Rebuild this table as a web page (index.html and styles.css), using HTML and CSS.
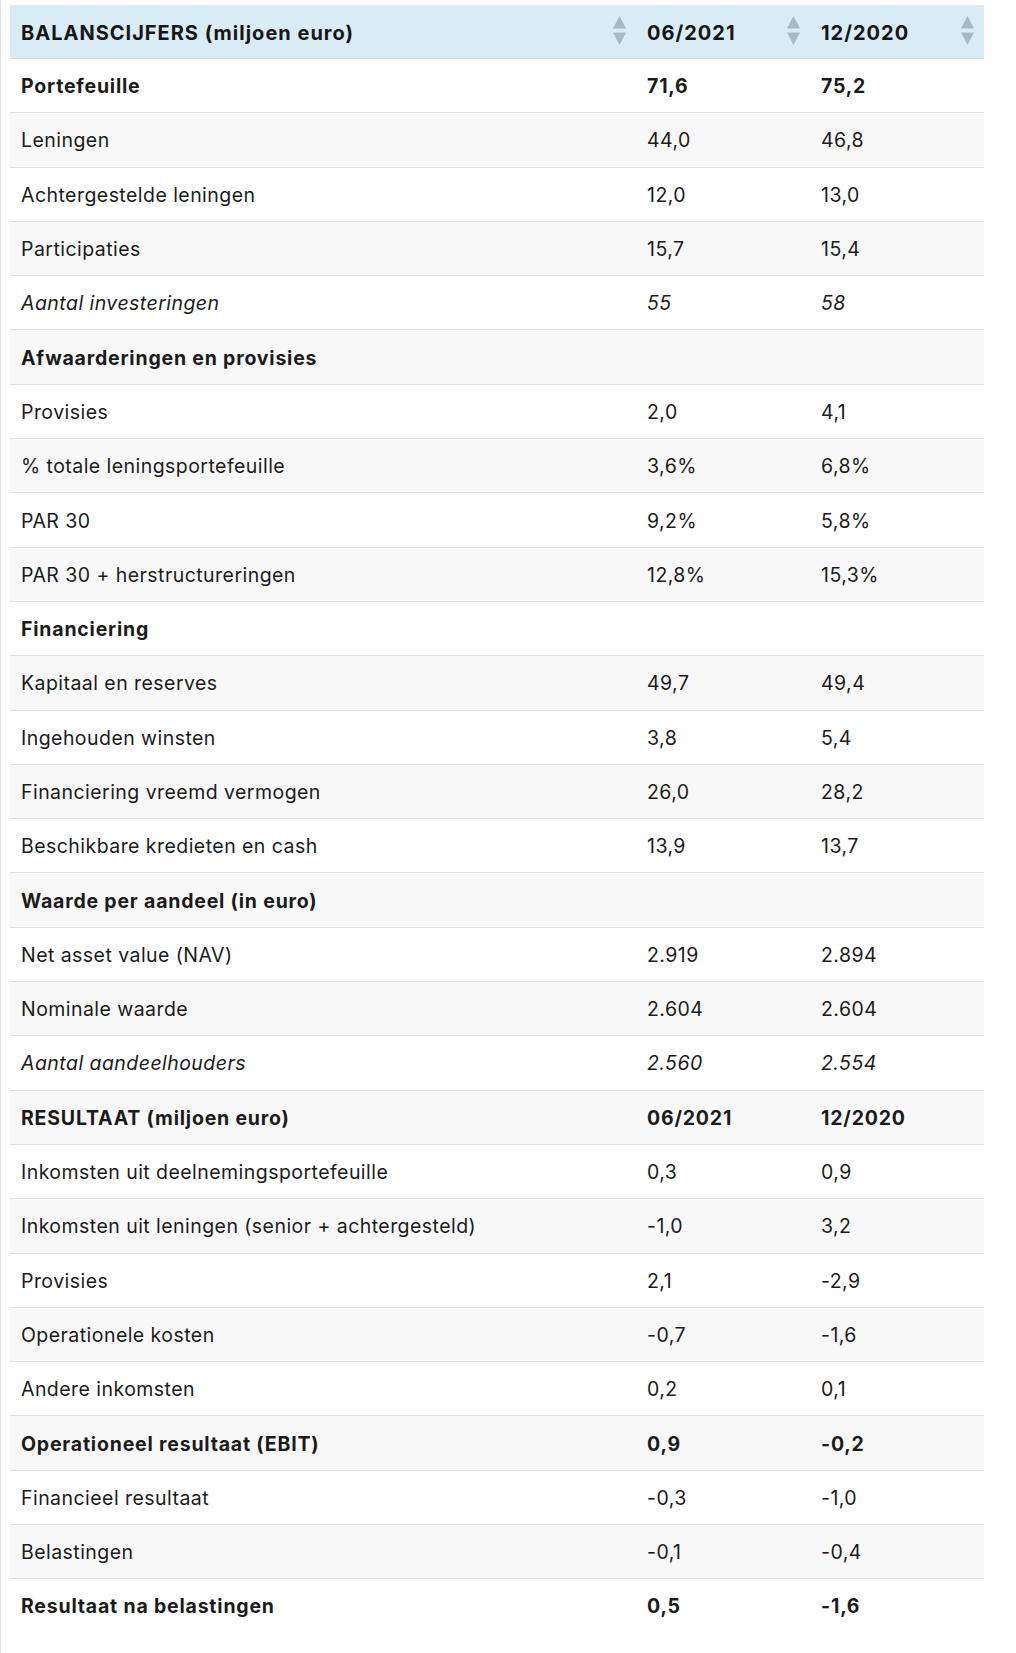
FILE: index.html
```html
<!DOCTYPE html>
<html lang="nl">
<head>
<meta charset="utf-8">
<title>Balanscijfers</title>
<link rel="stylesheet" href="styles.css">
</head>
<body>
<div class="page">
<table class="fin">
<colgroup><col class="c1"><col class="c2"><col class="c3"></colgroup>
<thead>
<tr>
<th><span>BALANSCIJFERS (miljoen euro)</span><svg class="sort" viewBox="0 0 13 29"><path d="M6.5 0 L13 12.5 L0 12.5 Z"/><path d="M0 16.5 L13 16.5 L6.5 29 Z"/></svg></th>
<th><span>06/2021</span><svg class="sort" viewBox="0 0 13 29"><path d="M6.5 0 L13 12.5 L0 12.5 Z"/><path d="M0 16.5 L13 16.5 L6.5 29 Z"/></svg></th>
<th><span>12/2020</span><svg class="sort" viewBox="0 0 13 29"><path d="M6.5 0 L13 12.5 L0 12.5 Z"/><path d="M0 16.5 L13 16.5 L6.5 29 Z"/></svg></th>
</tr>
</thead>
<tbody>
<tr class="b"><td>Portefeuille</td><td>71,6</td><td>75,2</td></tr>
<tr><td>Leningen</td><td>44,0</td><td>46,8</td></tr>
<tr><td>Achtergestelde leningen</td><td>12,0</td><td>13,0</td></tr>
<tr><td>Participaties</td><td>15,7</td><td>15,4</td></tr>
<tr class="i"><td>Aantal investeringen</td><td>55</td><td>58</td></tr>
<tr class="b"><td>Afwaarderingen en provisies</td><td></td><td></td></tr>
<tr><td>Provisies</td><td>2,0</td><td>4,1</td></tr>
<tr><td>% totale leningsportefeuille</td><td>3,6%</td><td>6,8%</td></tr>
<tr><td>PAR 30</td><td>9,2%</td><td>5,8%</td></tr>
<tr><td>PAR 30 + herstructureringen</td><td>12,8%</td><td>15,3%</td></tr>
<tr class="b"><td>Financiering</td><td></td><td></td></tr>
<tr><td>Kapitaal en reserves</td><td>49,7</td><td>49,4</td></tr>
<tr><td>Ingehouden winsten</td><td>3,8</td><td>5,4</td></tr>
<tr><td>Financiering vreemd vermogen</td><td>26,0</td><td>28,2</td></tr>
<tr><td>Beschikbare kredieten en cash</td><td>13,9</td><td>13,7</td></tr>
<tr class="b"><td>Waarde per aandeel (in euro)</td><td></td><td></td></tr>
<tr><td>Net asset value (NAV)</td><td>2.919</td><td>2.894</td></tr>
<tr><td>Nominale waarde</td><td>2.604</td><td>2.604</td></tr>
<tr class="i"><td>Aantal aandeelhouders</td><td>2.560</td><td>2.554</td></tr>
<tr class="b"><td>RESULTAAT (miljoen euro)</td><td>06/2021</td><td>12/2020</td></tr>
<tr><td>Inkomsten uit deelnemingsportefeuille</td><td>0,3</td><td>0,9</td></tr>
<tr><td>Inkomsten uit leningen (senior + achtergesteld)</td><td>-1,0</td><td>3,2</td></tr>
<tr><td>Provisies</td><td>2,1</td><td>-2,9</td></tr>
<tr><td>Operationele kosten</td><td>-0,7</td><td>-1,6</td></tr>
<tr><td>Andere inkomsten</td><td>0,2</td><td>0,1</td></tr>
<tr class="b"><td>Operationeel resultaat (EBIT)</td><td>0,9</td><td>-0,2</td></tr>
<tr><td>Financieel resultaat</td><td>-0,3</td><td>-1,0</td></tr>
<tr><td>Belastingen</td><td>-0,1</td><td>-0,4</td></tr>
<tr class="b last"><td>Resultaat na belastingen</td><td>0,5</td><td>-1,6</td></tr>
</tbody>
</table>
</div>
</body>
</html>
```
FILE: styles.css
```css
html, body {
  margin: 0;
  padding: 0;
  background: #ffffff;
}
body {
  font-family: Inter, "Liberation Sans", sans-serif;
  color: #1b1b1b;
}
.page {
  border-left: 1px solid #e2e2e2;
  padding: 5px 0 20px 9px;
  min-height: 1628px;
}
.fin {
  width: 974px;
  table-layout: fixed;
  border-collapse: collapse;
  font-size: 19.5px;
  letter-spacing: 0.45px;
}
.c1 { width: 626px; }
.c2 { width: 174px; }
.c3 { width: 174px; }
.fin th {
  position: relative;
  background: #d9ecf6;
  text-align: left;
  font-weight: 700;
  font-size: 20px;
  letter-spacing: 1px;
  height: 51px;
  padding: 2px 11px 0;
  border-bottom: 1px solid #d4dde2;
  color: #161616;
  white-space: nowrap;
}
.sort {
  position: absolute;
  right: 10px;
  top: 11px;
  width: 13px;
  height: 29px;
  fill: #a9b9c3;
}
.fin td {
  padding: 2px 11px 0;
  height: 51.3px;
  border-bottom: 1px solid #e1e1e1;
  line-height: 27px;
  white-space: nowrap;
}
.fin tbody tr:nth-child(even) td {
  background: #f8f8f8;
}
.fin tr.b td {
  font-weight: 700;
  letter-spacing: 0.8px;
}
.fin tr.i td {
  font-style: italic;
}
.fin tr.last td {
  border-bottom: none;
}
```
